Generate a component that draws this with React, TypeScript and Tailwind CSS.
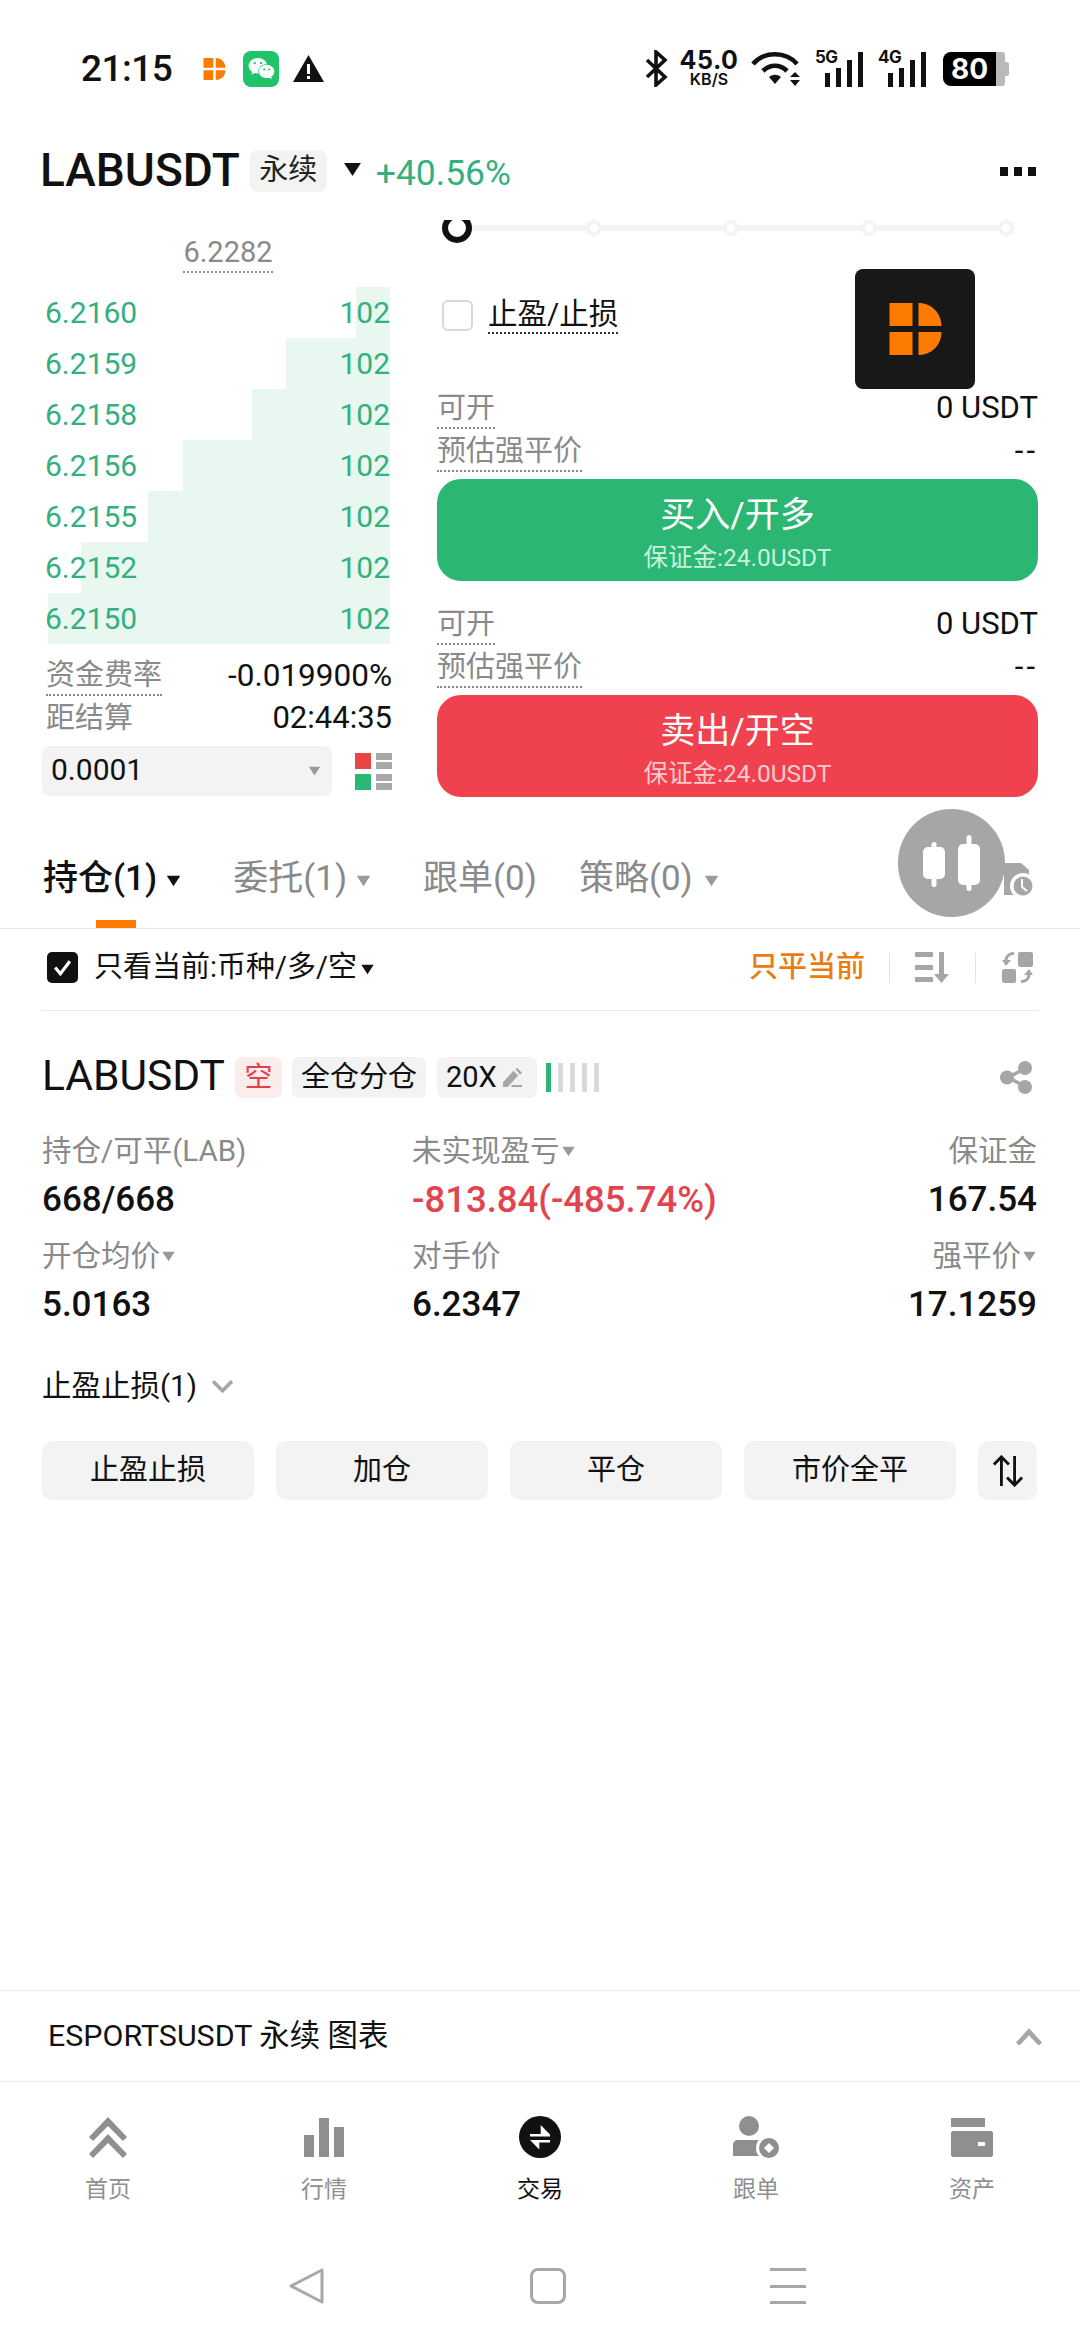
import { FaWeixin } from "react-icons/fa";

const asks = [
  { price: "6.2160", depth: 34 },
  { price: "6.2159", depth: 104 },
  { price: "6.2158", depth: 138 },
  { price: "6.2156", depth: 207 },
  { price: "6.2155", depth: 242 },
  { price: "6.2152", depth: 309 },
  { price: "6.2150", depth: 342 },
];

function Caret({ className }: { className: string }) {
  return (
    <svg viewBox="0 0 10 8" className={className} fill="currentColor">
      <path d="M0.5 0.5h9L5 7.5z" />
    </svg>
  );
}

function BrandMark({ className }: { className: string }) {
  return (
    <svg viewBox="0 0 52 52" className={className} fill="#ff7a00">
      <path d="M0 0h23v23H0zM0 29h23v23H0zM29 0c13 0 23 10 23 23H29zM29 29h23c0 13-10 23-23 23z" />
    </svg>
  );
}

function Signal() {
  return (
    <div className="absolute bottom-0 right-0 flex items-end gap-[6px]">
      <span className="h-[14px] w-[5px] bg-[#111]" />
      <span className="h-[19px] w-[5px] bg-[#111]" />
      <span className="h-[27px] w-[5px] bg-[#111]" />
      <span className="h-[35px] w-[5px] bg-[#111]" />
    </div>
  );
}

function StatusBar() {
  return (
    <div className="flex h-[136px] shrink-0 items-center pl-[81px] pt-[1px]">
      <span className="w-[122px] text-[37px] font-medium text-[#111] tracking-[-0.5px]">21:15</span>
      <BrandMark className="h-[22px] w-[23px]" />
      <div className="ml-[17px] flex h-[36px] w-[36px] items-center justify-center rounded-[8px] bg-[#1fc468]">
        <FaWeixin className="text-[27px] text-white" />
      </div>
      <svg viewBox="0 0 31 27" className="ml-[14px] h-[27px] w-[31px]">
        <path d="M15.5 0L31 27H0z" fill="#111" />
        <path d="M14 9h3v10h-3zM14 21h3v3h-3z" fill="#fff" />
      </svg>
      <svg viewBox="0 0 23 37" className="ml-[321px] h-[37px] w-[23px]" fill="none" stroke="#111" strokeWidth="3.6">
        <path d="M2 10l18 17-9 8V2l9 8L2 27" />
      </svg>
      <div className="ml-[12px] flex w-[58px] flex-col items-center font-['Inter',sans-serif] text-[#111]">
        <span className="text-[25px] font-bold leading-[21px] tracking-[0.5px]">45.0</span>
        <span className="text-[16px] font-semibold leading-[16px]">KB/S</span>
      </div>
      <svg viewBox="0 0 49 35" className="ml-[13px] h-[35px] w-[49px]" fill="none" stroke="#111" strokeWidth="4.6">
        <path d="M2 13C13 0 35 0 46 13M12 20c7-7 17-7 24 0" />
        <path d="M18 26c4-3 8-3 12 0l-6 7z" fill="#111" stroke="none" />
        <path d="M44 21l5 5H39zM44 35l5-6H39z" fill="#111" stroke="none" />
      </svg>
      <div className="relative ml-[15px] h-[36px] w-[48px]">
        <span className="absolute left-0 top-[-2px] font-['Inter',sans-serif] text-[17px] font-bold leading-[16px] tracking-[-0.5px] text-[#111]">5G</span>
        <Signal />
      </div>
      <div className="relative ml-[15px] h-[36px] w-[48px]">
        <span className="absolute left-0 top-[-2px] font-['Inter',sans-serif] text-[17px] font-bold leading-[16px] tracking-[-0.5px] text-[#111]">4G</span>
        <Signal />
      </div>
      <div className="ml-[17px] flex h-[34px] w-[66px] items-center">
        <div className="flex h-full w-[53px] items-center justify-center rounded-l-[8px] bg-black font-['Inter',sans-serif] text-[28px] font-bold text-white">80</div>
        <div className="h-full w-[9px] rounded-r-[3px] bg-[#b9b9b9]" />
        <div className="h-[14px] w-[4px] rounded-r-[2px] bg-[#b9b9b9]" />
      </div>
    </div>
  );
}

function TopHeader() {
  return (
    <div className="flex h-[84px] shrink-0 items-center pb-[14px] pl-[40px] pr-[44px]">
      <span className="mt-[-2px] text-[46px] font-medium leading-none text-[#111]">LABUSDT</span>
      <span className="ml-[10px] flex h-[42px] w-[77px] items-center justify-center rounded-[8px] bg-[#f3f3f3] text-[29px] text-[#222]">永续</span>
      <Caret className="ml-[15px] mt-[-4px] h-[15px] w-[21px] text-[#111]" />
      <span className="ml-[13px] mt-[6px] text-[35.5px] text-[#33b07e]">+40.56%</span>
      <div className="ml-auto flex gap-[6px]">
        <span className="h-[9px] w-[8px] bg-[#111]" />
        <span className="h-[9px] w-[8px] bg-[#111]" />
        <span className="h-[9px] w-[8px] bg-[#111]" />
      </div>
    </div>
  );
}

function OrderBook() {
  return (
    <div className="flex w-[352px] flex-col">
      <div className="flex h-[67px] justify-center pl-[24px] pt-[12px]">
        <span className="h-[41px] border-b-2 border-dotted border-[#9a9a9a] text-[29px] leading-[40px] text-[#8a8a8a]">6.2282</span>
      </div>
      {asks.map((row) => (
        <div key={row.price} className="relative ml-[5px] flex h-[51px] w-[345px] items-center justify-between text-[30px] text-[#33b07e]">
          <div className="absolute inset-y-0 right-0 bg-[#e8f8f0]" style={{ width: row.depth }} />
          <span className="relative">{row.price}</span>
          <span className="relative">102</span>
        </div>
      ))}
      <div className="ml-[6px] mt-[10px] flex h-[43px] w-[346px] items-center justify-between">
        <span className="h-[41px] border-b-2 border-dotted border-[#8a8a8a] text-[29px] leading-[40px] text-[#8a8a8a]">资金费率</span>
        <span className="text-[31.5px] text-[#111]">-0.019900%</span>
      </div>
      <div className="ml-[6px] flex h-[43px] w-[346px] items-center justify-between">
        <span className="text-[29px] text-[#8a8a8a]">距结算</span>
        <span className="text-[31px] text-[#111]">02:44:35</span>
      </div>
      <div className="mt-[6px] flex items-center">
        <div className="ml-[2px] flex h-[50px] w-[290px] items-center justify-between rounded-[8px] bg-[#f3f3f3] pl-[9px] pr-[10px]">
          <span className="pb-[3px] text-[30px] text-[#111]">0.0001</span>
          <Caret className="h-[10px] w-[15px] text-[#9a9a9a]" />
        </div>
        <div className="ml-[23px] grid h-[37px] w-[37px] grid-cols-[16px_16px] gap-x-[5px] gap-y-[5px]">
          <span className="h-[16px] bg-[#e84545]" />
          <div className="flex h-[16px] flex-col justify-between"><span className="h-[7px] bg-[#a8a8a8]" /><span className="h-[7px] bg-[#a8a8a8]" /></div>
          <span className="h-[16px] bg-[#2bb673]" />
          <div className="flex h-[16px] flex-col justify-between"><span className="h-[7px] bg-[#a8a8a8]" /><span className="h-[7px] bg-[#a8a8a8]" /></div>
        </div>
      </div>
    </div>
  );
}

function TradeAction({ label, bg, sub }: { label: string; bg: string; sub: string }) {
  return (
    <>
      <div className="flex h-[43px] items-center justify-between">
        <span className="h-[40px] border-b-2 border-dotted border-[#8a8a8a] text-[29px] leading-[38px] text-[#8a8a8a]">可开</span>
        <span className="text-[31px] text-[#111]">0 USDT</span>
      </div>
      <div className="flex h-[43px] items-center justify-between">
        <span className="h-[40px] border-b-2 border-dotted border-[#8a8a8a] text-[29px] leading-[38px] text-[#8a8a8a]">预估强平价</span>
        <span className="text-[31px] tracking-[3px] text-[#111]">--</span>
      </div>
      <div className={`mt-[6px] flex h-[102px] flex-col items-center rounded-[24px] ${bg}`}>
        <span className="mt-[16px] text-[35px] leading-[42px] text-white">{label}</span>
        <span className={`mt-[6px] text-[24.5px] leading-[30px] ${sub}`}>保证金:24.0USDT</span>
      </div>
    </>
  );
}

function OrderForm() {
  return (
    <div className="relative ml-[45px] flex w-[601px] flex-col">
      <div className="relative h-[28px] w-[578px] overflow-hidden">
        <div className="absolute left-[5px] right-[5px] top-[5px] h-[6px] bg-[#f3f3f3]" />
        <div className="relative flex items-start justify-between pl-[11px] pr-[1px]">
          <span className="invisible h-[16px] w-[16px]" />
          <span className="h-[16px] w-[16px] rounded-full border-[4px] border-[#f3f3f3] bg-white" />
          <span className="h-[16px] w-[16px] rounded-full border-[4px] border-[#f3f3f3] bg-white" />
          <span className="h-[16px] w-[16px] rounded-full border-[4px] border-[#f3f3f3] bg-white" />
          <span className="h-[16px] w-[16px] rounded-full border-[4px] border-[#f3f3f3] bg-white" />
        </div>
        <span className="absolute left-[5px] top-[-7px] h-[30px] w-[30px] rounded-full border-[6px] border-[#111] bg-white" />
      </div>
      <div className="mt-[47px] flex h-[40px] items-center pl-[5px]">
        <span className="h-[31px] w-[31px] rounded-[6px] border-2 border-[#d9d9d9] bg-white" />
        <span className="ml-[15px] h-[38px] border-b-2 border-dotted border-[#333] text-[29.5px] leading-[36px] text-[#111]">止盈/止损</span>
      </div>
      <div className="mt-[52px]">
        <TradeAction label="买入/开多" bg="bg-[#2bb673]" sub="text-[#c8f2dc]" />
      </div>
      <div className="mt-[22px]">
        <TradeAction label="卖出/开空" bg="bg-[#f0424e]" sub="text-[#fbc9cd]" />
      </div>
      <div className="absolute left-[418px] top-[49px] flex h-[120px] w-[120px] items-center justify-center rounded-[8px] bg-[#181818]">
        <BrandMark className="h-[52px] w-[53px]" />
      </div>
    </div>
  );
}

function PositionTabs() {
  return (
    <div className="relative flex h-[129px] shrink-0 items-center border-b border-[#e8e8e8] pl-[43px] pt-[30px] text-[35px] text-[#8a8a8a]">
      <span className="font-medium text-[#111]">持仓(1)</span>
      <Caret className="ml-[9px] mt-[4px] h-[12px] w-[15px] text-[#111]" />
      <span className="ml-[52px]">委托(1)</span>
      <Caret className="ml-[9px] mt-[4px] h-[12px] w-[15px] text-[#9a9a9a]" />
      <span className="ml-[52px]">跟单(0)</span>
      <span className="ml-[42px]">策略(0)</span>
      <Caret className="ml-[11px] mt-[4px] h-[12px] w-[15px] text-[#9a9a9a]" />
      <span className="absolute bottom-0 left-[96px] h-[8px] w-[40px] bg-[#ff7a00]" />
      <svg viewBox="0 0 29 36" className="absolute left-[1004px] top-[63px] h-[36px] w-[29px]">
        <path d="M0 0h17l8 7v25H0z" fill="#a6a6a6" />
        <circle cx="19" cy="23" r="13" fill="#fff" />
        <circle cx="19" cy="23" r="9.5" fill="#a6a6a6" />
        <path d="M18 16v8l5 4" fill="none" stroke="#fff" strokeWidth="2" />
      </svg>
      <div className="absolute left-[898px] top-[9px] flex h-[108px] w-[107px] items-center justify-center gap-[13px] rounded-full bg-[#a6a6a6]">
        <svg viewBox="0 0 22 45" className="mt-[3px] h-[45px] w-[22px]" fill="#fff">
          <rect x="0" y="5" width="22" height="32" rx="5" />
          <rect x="8.5" y="0" width="5" height="45" rx="2.5" />
        </svg>
        <svg viewBox="0 0 22 56" className="h-[56px] w-[22px]" fill="#fff">
          <rect x="0" y="9" width="22" height="41" rx="5" />
          <rect x="8.5" y="0" width="5" height="56" rx="2.5" />
        </svg>
      </div>
    </div>
  );
}

function FilterRow() {
  return (
    <div className="mx-[42px] flex h-[82px] shrink-0 items-center border-b border-[#e8e8e8] pb-[4px] pr-[5px]">
      <span className="ml-[5px] flex h-[31px] w-[31px] items-center justify-center rounded-[5px] bg-[#111]">
        <svg viewBox="0 0 20 20" className="h-[21px] w-[21px]" fill="none" stroke="#fff" strokeWidth="3">
          <path d="M3 10l5 6L17 4" />
        </svg>
      </span>
      <span className="ml-[16px] text-[29px] text-[#111]">只看当前:币种/多/空</span>
      <Caret className="ml-[3px] mt-[4px] h-[11px] w-[15px] text-[#111]" />
      <span className="ml-auto text-[29px] font-medium text-[#ea7c14]">只平当前</span>
      <span className="ml-[24px] h-[30px] w-px bg-[#e3e3e3]" />
      <svg viewBox="0 0 34 31" className="ml-[25px] h-[31px] w-[34px]" fill="#a6a6a6">
        <path d="M0 0h18v5H0zM0 13h18v5H0zM0 25h18v5H0zM24 0h5v22h5l-7.5 9L19 22h5z" />
      </svg>
      <span className="ml-[26px] h-[30px] w-px bg-[#e3e3e3]" />
      <svg viewBox="0 0 31 31" className="ml-[26px] h-[31px] w-[31px]" fill="#a6a6a6">
        <rect x="16" y="0" width="15" height="15" rx="2" />
        <rect x="0" y="17" width="14" height="14" rx="2" />
        <path d="M12 0v3C8 3 6 5 5.500 8H9l-5 6-4-6h2.500C3 3 7 0 12 0z" />
        <path d="M19 31v-3c4 0 6-2 6.500-5H22l5-6 4 6h-2.500C28 28 24 31 19 31z" />
      </svg>
    </div>
  );
}

function Stat({ label, value, caret, right, valueClass }: { label: string; value: string; caret?: boolean; right?: boolean; valueClass?: string }) {
  return (
    <div className={`flex flex-col ${right ? "items-end" : "items-start"}`}>
      <div className="flex h-[42px] items-center text-[29.5px] text-[#8a8a8a]">
        {label}
        {caret && <Caret className="ml-[1px] h-[11px] w-[15px] text-[#9a9a9a]" />}
      </div>
      <div className={`font-medium leading-[56px] ${valueClass ?? "text-[35px] text-[#111]"}`}>{value}</div>
    </div>
  );
}

function PositionCard() {
  const actions = ["止盈止损", "加仓", "平仓", "市价全平"];
  return (
    <div className="flex shrink-0 flex-col pl-[42px] pr-[43px] pt-[46px]">
      <div className="flex h-[41px] items-center">
        <span className="pb-[3px] text-[42.5px] leading-none text-[#111]">LABUSDT</span>
        <span className="ml-[10px] flex h-[41px] w-[47px] items-center justify-center rounded-[7px] bg-[#fdecec] text-[28px] text-[#e0424c]">空</span>
        <span className="ml-[10px] flex h-[41px] w-[134px] items-center justify-center rounded-[7px] bg-[#f3f3f3] text-[29px] text-[#111]">全仓分仓</span>
        <span className="ml-[11px] flex h-[41px] w-[100px] items-center gap-[6px] rounded-[7px] bg-[#f3f3f3] pl-[9px] text-[29px] text-[#111]">
          20X
          <svg viewBox="0 0 20 20" className="h-[19px] w-[19px]" fill="#a6a6a6">
            <path d="M0 20v-5L11 3l5 5L5 20zM13 1l2-1 5 5-2 2zM9 18h11v2H9z" />
          </svg>
        </span>
        <div className="ml-[9px] flex h-[29px] gap-[7px]">
          <span className="w-[5px] bg-[#2bb673]" />
          <span className="w-[5px] bg-[#d9d9d9]" />
          <span className="w-[5px] bg-[#d9d9d9]" />
          <span className="w-[5px] bg-[#d9d9d9]" />
          <span className="w-[5px] bg-[#d9d9d9]" />
        </div>
        <svg viewBox="0 0 32 33" className="ml-auto mr-[5px] h-[33px] w-[32px]" fill="#a6a6a6">
          <circle cx="25" cy="7" r="7" />
          <circle cx="7" cy="16.5" r="7" />
          <circle cx="25" cy="26" r="7" />
          <path d="M7 15l17-9 2 3-17 9zM9 15l17 9-2 3-17-9z" />
        </svg>
      </div>
      <div className="mt-[32px] grid grid-cols-[370px_1fr_auto] gap-y-[7px]">
        <Stat label="持仓/可平(LAB)" value="668/668" />
        <Stat label="未实现盈亏" caret value="-813.84(-485.74%)" valueClass="text-[36.5px] text-[#e2444f]" />
        <Stat label="保证金" right value="167.54" />
        <Stat label="开仓均价" caret value="5.0163" />
        <Stat label="对手价" value="6.2347" />
        <Stat label="强平价" caret right value="17.1259" />
      </div>
      <div className="mt-[33px] flex h-[40px] items-center text-[29.5px] text-[#111]">
        止盈止损(1)
        <svg viewBox="0 0 20 12" className="ml-[15px] h-[13px] w-[21px]" fill="none" stroke="#a6a6a6" strokeWidth="3.5">
          <path d="M1 1l9 9 9-9" />
        </svg>
      </div>
      <div className="mt-[35px] flex h-[59px] gap-[22px]">
        {actions.map((a) => (
          <div key={a} className="flex flex-1 items-center justify-center rounded-[10px] bg-[#f3f3f3] text-[29px] text-[#111]">{a}</div>
        ))}
        <div className="flex w-[59px] items-center justify-center rounded-[10px] bg-[#f3f3f3]">
          <svg viewBox="0 0 34 34" className="h-[32px] w-[34px]" fill="none" stroke="#111" strokeWidth="3">
            <path d="M10 33V2M2 10l8-8 8 8M24 1v31M16 24l8 8 8-8" />
          </svg>
        </div>
      </div>
    </div>
  );
}

function ChartBar() {
  return (
    <div className="flex h-[92px] shrink-0 items-center justify-between border-y border-[#ececec] pl-[48px] pr-[37px]">
      <span className="text-[30.4px] text-[#111]">ESPORTSUSDT 永续 图表</span>
      <svg viewBox="0 0 28 18" className="h-[17px] w-[28px]" fill="none" stroke="#a6a6a6" strokeWidth="5">
        <path d="M2 17L14 4l12 13" />
      </svg>
    </div>
  );
}

function BottomNav() {
  const tabs = [
    {
      label: "首页",
      icon: (
        <svg viewBox="0 0 38 41" className="h-[41px] w-[38px]" fill="#8f8f8f">
          <path d="M19 0l19 20-4 4L19 9 4 24l-4-4z" />
          <path d="M19 17l19 20-4 4-15-15L4 41l-4-4z" />
        </svg>
      ),
    },
    {
      label: "行情",
      icon: (
        <svg viewBox="0 0 40 39" className="h-[39px] w-[40px]" fill="#8f8f8f">
          <path d="M0 17h10v22H0zM15 0h10v39H15zM30 9h10v30H30z" />
        </svg>
      ),
    },
    {
      label: "交易",
      active: true,
      icon: (
        <svg viewBox="0 0 42 42" className="h-[42px] w-[42px]">
          <circle cx="21" cy="21" r="21" fill="#111" />
          <path d="M21.700 9l9.300 9.500v2H11v-2.500h10.700zM20.300 33.500L11 24h20v2.500H20.300z" fill="#fff" />
        </svg>
      ),
    },
    {
      label: "跟单",
      icon: (
        <svg viewBox="0 0 46 42" className="h-[42px] w-[46px]">
          <circle cx="16" cy="10" r="10" fill="#8f8f8f" />
          <path d="M5 24h22v16H0v-11c0-3 2-5 5-5z" fill="#8f8f8f" />
          <circle cx="36" cy="32" r="13" fill="#fff" />
          <circle cx="36" cy="32" r="10" fill="#8f8f8f" />
          <path d="M36 27l5 5-5 5-5-5z" fill="#fff" />
        </svg>
      ),
    },
    {
      label: "资产",
      icon: (
        <svg viewBox="0 0 42 39" className="h-[39px] w-[42px]" fill="#8f8f8f">
          <path d="M0 0h34v9H0z" />
          <path fillRule="evenodd" d="M2 13h38a2 2 0 0 1 2 2v22a2 2 0 0 1-2 2H2a2 2 0 0 1-2-2V15a2 2 0 0 1 2-2zM27 24h7v4h-7z" />
        </svg>
      ),
    },
  ];
  return (
    <div className="grid h-[158px] shrink-0 grid-cols-5 pt-[33px]">
      {tabs.map((t) => (
        <div key={t.label} className="flex flex-col items-center">
          <div className="flex h-[44px] items-center justify-center">{t.icon}</div>
          <span className={`mt-[16px] text-[23px] leading-[30px] ${t.active ? "text-[#111]" : "text-[#8f8f8f]"}`}>{t.label}</span>
        </div>
      ))}
    </div>
  );
}

function SystemNav() {
  return (
    <div className="flex shrink-0 justify-center pl-[14px] pt-[28px]">
      <svg viewBox="0 0 36 36" className="h-[36px] w-[36px]" fill="none" stroke="#a8a8a8" strokeWidth="3" strokeLinejoin="round">
        <path d="M33 2v32L2 18z" />
      </svg>
      <span className="ml-[205px] h-[36px] w-[36px] rounded-[8px] border-[3px] border-[#a8a8a8]" />
      <div className="ml-[204px] flex h-[36px] w-[36px] flex-col justify-between">
        <span className="h-[3px] bg-[#a8a8a8]" />
        <span className="h-[3px] bg-[#a8a8a8]" />
        <span className="h-[3px] bg-[#a8a8a8]" />
      </div>
    </div>
  );
}

export default function App() {
  return (
    <main className="flex h-[2352px] w-[1080px] flex-col overflow-hidden bg-white font-['Roboto','Noto_Sans_CJK_SC',sans-serif]">
      <StatusBar />
      <TopHeader />
      <div className="flex h-[580px] shrink-0 pl-[40px]">
        <OrderBook />
        <OrderForm />
      </div>
      <PositionTabs />
      <FilterRow />
      <PositionCard />
      <div className="flex-1" />
      <ChartBar />
      <BottomNav />
      <SystemNav />
      <div className="h-[48px] shrink-0" />
    </main>
  );
}
